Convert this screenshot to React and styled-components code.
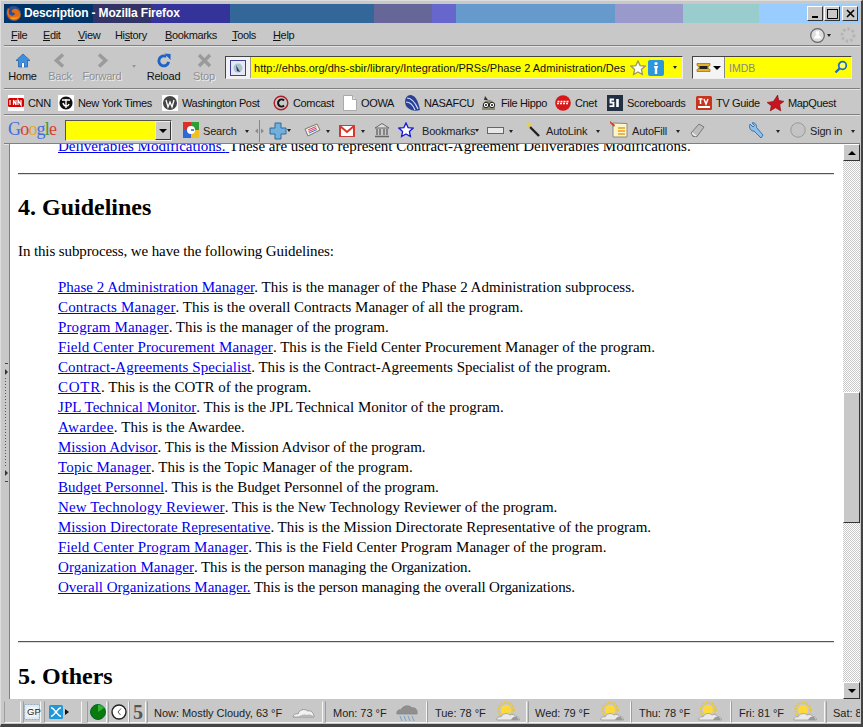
import React from "react";
import styled, { createGlobalStyle } from "styled-components";

const Global = createGlobalStyle`
  html, body { margin: 0; padding: 0; width: 863px; height: 727px; overflow: hidden; background: #c8c8c8; }
  * { box-sizing: border-box; }
`;

const Win = styled.div`
  position: relative; width: 863px; height: 727px; background: #c8c8c8; overflow: hidden;
  font-family: "Liberation Sans", sans-serif; color: #111;
  border-top: 1px solid #ddd; border-left: 1px solid #ddd;
  border-right: 2px solid #444; border-bottom: 3px solid #444;
`;
const TitleBar = styled.div`
  position: absolute; left: 3px; top: 3px; width: 856px; height: 19px; display: flex; overflow: hidden;
`;
const Seg = styled.div`
  width: ${p => p.$w}px; height: 100%; background: ${p => p.$c}; flex: none;
`;
const TitleText = styled.div`
  position: absolute; left: 20px; top: 1px; font: bold 12px/17px "Liberation Sans", sans-serif; letter-spacing: -0.15px; color: #fff; white-space: nowrap;
`;
const TitleIcon = styled.div`
  position: absolute; left: 1px; top: 1px; width: 17px; height: 17px;
`;
const WinBtns = styled.div`
  position: absolute; right: 2px; top: 2px; display: flex;
`;
const WinBtn = styled.div`
  width: 16px; height: 15px; background: #c8c8c8; margin-left: ${p => p.$gap || 0}px;
  border: 1px solid; border-color: #fff #333 #333 #fff; display: flex; align-items: center; justify-content: center;
`;
const Bar = styled.div`
  position: absolute; left: 3px; width: 856px; top: ${p => p.$t}px; height: ${p => p.$h}px;
  border-bottom: 1px solid #808080; box-shadow: 0 1px 0 #e4e4e4;
`;
const MenuItem = styled.span`
  position: absolute; left: ${p => p.$x}px; top: 3px; font: 11px/17px "Liberation Sans", sans-serif; letter-spacing: -0.35px; color: #111; white-space: nowrap;
  u { text-decoration: underline; }
`;
const NavBtn = styled.div`
  position: absolute; left: ${p => p.$x}px; top: 7px; width: ${p => p.$w}px; display: flex; flex-direction: column; align-items: center;
  font: 11px/14px "Liberation Sans", sans-serif; letter-spacing: -0.2px; color: ${p => p.$off ? "#8f8f8f" : "#111"};
  text-shadow: ${p => p.$off ? "1px 1px 0 #eee" : "none"}; svg { display: block; margin-bottom: 1px; }
`;
const UrlBox = styled.div`
  position: absolute; left: 221px; top: 10px; width: 458px; height: 23px; background: #ffff00;
  border: 1px solid; border-color: #444 #eee #eee #444; display: flex; align-items: center; overflow: hidden;
`;
const UrlFav = styled.div`
  width: 25px; height: 100%; flex: none; background: #f2f2f4; border-right: 1px solid #999; display: flex; align-items: center; justify-content: center;
`;
const UrlText = styled.div`
  width: 371px; margin-left: 3px; font: 11px/16px "Liberation Sans", sans-serif; letter-spacing: .02px; overflow: hidden; white-space: nowrap; flex: none; color: #111;
`;
const SearchBox = styled.div`
  position: absolute; left: 688px; top: 10px; width: 160px; height: 23px; background: #ffff00;
  border: 1px solid; border-color: #444 #eee #eee #444; display: flex; align-items: center;
`;
const SearchEngine = styled.div`
  width: 32px; height: 100%; flex: none; background: #f4f4f4; border-right: 1px solid #888; display: flex; align-items: center; justify-content: center; gap: 2px;
`;
const SearchHint = styled.div`
  margin-left: 4px; font: 10.5px/16px "Liberation Sans", sans-serif; color: #888;
`;
const Caret = styled.span`
  position: absolute; left: ${p => p.$x}px; top: ${p => p.$y}px; width: 0; height: 0;
  border-left: 2.5px solid transparent; border-right: 2.5px solid transparent; border-top: 3px solid ${p => p.$c || "#222"};
`;
const Place = styled.div`
  position: absolute; left: ${p => p.$x}px; top: ${p => p.$y}px; line-height: 0;
`;
const BmItem = styled.span`
  position: absolute; left: ${p => p.$x}px; top: 5px; display: flex; align-items: center; gap: 4px; height: 18px;
  font: 11px/17px "Liberation Sans", sans-serif; letter-spacing: -0.35px; white-space: nowrap; color: #111;
`;
const GText = styled.span`
  position: absolute; left: ${p => p.$x}px; top: 8px; font: 11px/16px "Liberation Sans", sans-serif; letter-spacing: -0.2px; white-space: nowrap; color: #222;
`;
const GoogleLogo = styled.span`
  position: absolute; left: 4px; top: 3px; font: 18px/22px "Liberation Serif", serif; letter-spacing: -0.8px;
`;
const GL = styled.span` color: ${p => p.$c}; `;
const GInput = styled.div`
  position: absolute; left: 61px; top: 5px; width: 107px; height: 21px; background: #ffff00;
  border: 1px solid; border-color: #555 #eee #eee #555;
`;
const GDrop = styled.div`
  position: absolute; right: 0; top: 0; width: 16px; height: 19px; background: #c8c8c8;
  border: 1px solid; border-color: #eee #333 #333 #eee; display: flex; align-items: center; justify-content: center;
`;
const Tri = styled.span`
  width: 0; height: 0; border-left: 4px solid transparent; border-right: 4px solid transparent;
  border-${p => p.$up ? "bottom" : "top"}: 4px solid #000;
`;
const Side = styled.div`
  position: absolute; left: 3px; top: 143px; width: 5px; height: 556px;
`;
const Page = styled.div`
  position: absolute; left: 8px; top: 143px; width: 834px; height: 555px; background: #fff; overflow: hidden;
  font: 15px/20px "Liberation Serif", serif; color: #000; border-left: 1px solid #808080;
`;
const Inner = styled.div`
  padding: 0 8px; margin-top: -8px;
`;
const Indent = styled.div` margin-left: 40px; `;
const Line = styled.div` height: 20px; white-space: nowrap; `;
const Link = styled.a`
  color: #0000ee; text-decoration: underline; letter-spacing: ${p => p.$ls || 0}px;
`;
const Tail = styled.span` letter-spacing: ${p => p.$ls || 0}px; `;
const Rule = styled.hr`
  margin: ${p => p.$m}; height: 2px; border: 0; border-top: 1px solid #555; border-bottom: 1px solid #ddd; width: 816px;
`;
const H2 = styled.h2`
  margin: ${p => p.$m}; font: bold 24px/28px "Liberation Serif", serif; color: #000;
`;
const Para = styled.p` margin: 0 0 16px; height: 20px; letter-spacing: -0.11px; `;
const Scroll = styled.div`
  position: absolute; left: 842px; top: 143px; width: 17px; height: 555px;
  background-color: #fff;
  background-image: conic-gradient(#c8c8c8 25%, #fff 0 50%, #c8c8c8 0 75%, #fff 0);
  background-size: 2px 2px;
`;
const ScrollBtn = styled.div`
  position: absolute; left: 0; ${p => p.$pos}: 0; width: 17px; height: 17px; background: #c8c8c8;
  border: 1px solid; border-color: #fff #333 #333 #fff; display: flex; align-items: center; justify-content: center;
`;
const Thumb = styled.div`
  position: absolute; left: 0; top: 248px; width: 17px; height: 131px; background: #c8c8c8;
  border: 1px solid; border-color: #fff #333 #333 #fff;
`;
const Status = styled.div`
  position: absolute; left: 3px; top: 699px; width: 856px; height: 24px; background: #c8c8c8; overflow: hidden;
`;
const Cell = styled.div`
  position: absolute; left: ${p => p.$x}px; top: 1px; height: 22px; width: ${p => p.$w}px;
  border: 1px solid; border-color: #c8c8c8 #f6f6f6 #f6f6f6 #9c9c9c; overflow: hidden;
`;
const Wx = styled.span`
  position: absolute; left: ${p => p.$x}px; top: 3px; font: 11px/16px "Liberation Sans", sans-serif; letter-spacing: -0.03px; white-space: nowrap; color: #222;
`;
const Five = styled.span`
  position: absolute; left: 3px; top: 0; font: bold 20px/20px "Liberation Serif", serif; color: #555;
`;
const GpText = styled.span`
  position: absolute; left: 23px; top: 7px; font: 9.5px/10px "Liberation Sans", sans-serif; color: #222;
`;

const Fox = () => (
  <svg width="17" height="17" viewBox="0 0 17 17">
    <circle cx="8.500" cy="8.500" r="7.500" fill="#2a4f96" />
    <path d="M3 3c-2 4-1 9 3 11.500 4 2 8 .5 9.500-3 .5-3-1-6-3-7-2-1.500-5-.5-5.500 1-1 1 0 2 1 2l2 1c0 2-3 3-5 1.500C3.500 8 3.500 5 4.500 4.500z" fill="#e66b10" />
    <path d="M5 13c3 2 7 1 9-2-1 1-4 2-6 1.500z" fill="#f6b01e" />
  </svg>
);
const Home = () => (
  <svg width="16" height="15" viewBox="0 0 16 15">
    <path d="M8 1 1 7.500h2.500V14h3.500v-4h2v4h3.500V7.500H15z" fill="#3f8fdc" stroke="#1c5aa0" strokeWidth=".7" />
    <path d="M7 10h2v4H7z" fill="#fff" />
  </svg>
);
const Chev = ({ dir }) => (
  <svg width="14" height="15" viewBox="0 0 14 15">
    <path d={dir === "l" ? "M10 1.500 3.500 7.500 10 13.500" : "M4 1.500 10.500 7.500 4 13.500"} fill="none" stroke="#9b9b9b" strokeWidth="3.600" />
  </svg>
);
const Reload = () => (
  <svg width="16" height="15" viewBox="0 0 16 16">
    <path d="M13 9.500A5.300 5.300 0 1 1 10.500 3.800" fill="none" stroke="#1f62c8" strokeWidth="3" />
    <path d="M8.500 0.500 15 1v6.500z" fill="#1f62c8" />
  </svg>
);
const Stop = () => (
  <svg width="15" height="15" viewBox="0 0 15 15">
    <path d="M2 2l11 11M13 2 2 13" stroke="#9a9a9a" strokeWidth="3.400" />
  </svg>
);
const Fav = () => (
  <svg width="16" height="16" viewBox="0 0 16 16">
    <rect x=".5" y=".5" width="15" height="15" fill="#e6e8f4" stroke="#3b3f9a" />
    <circle cx="8" cy="8" r="4.500" fill="#a9c4cf" />
    <path d="M6 5l4 7-3-1z" fill="#335" />
  </svg>
);
const Star = ({ fill = "#fff", stroke = "#9a9a60", s = 16 }) => (
  <svg width={s} height={s} viewBox="0 0 16 16">
    <path d="M8 1l2.100 4.600 5 .5-3.700 3.400 1 5L8 12l-4.400 2.500 1-5L.9 6.100l5-.5z" fill={fill} stroke={stroke} strokeWidth="1.300" />
  </svg>
);
const Info = () => (
  <svg width="16" height="16" viewBox="0 0 16 16">
    <rect width="16" height="16" rx="2" fill="#2c97de" />
    <circle cx="8" cy="3.500" r="1.600" fill="#fff" />
    <path d="M6 6h4v1.500l-.8.300V14H6.800V7.800L6 7.500z" fill="#fff" />
  </svg>
);
const Glass = () => (
  <svg width="14" height="14" viewBox="0 0 14 14">
    <circle cx="8.500" cy="5.500" r="3.800" fill="#ffff66" stroke="#1f6fb8" strokeWidth="1.800" />
    <path d="M5.500 8.500 1.500 12.500" stroke="#1f6fb8" strokeWidth="2.400" />
  </svg>
);
const ImdbIcon = () => (
  <svg width="15" height="9" viewBox="0 0 15 9">
    <path d="M1 .5h13v2a2 2 0 0 0 0 4v2H1v-2a2 2 0 0 0 0-4z" fill="#e8b52a" stroke="#8a6510" strokeWidth=".7" />
    <rect x="3.500" y="3" width="8" height="3" fill="#222" />
  </svg>
);
const Cnn = () => (
  <svg width="16" height="16" viewBox="0 0 16 16">
    <rect width="16" height="16" fill="#fff" />
    <rect y="3" width="16" height="9" rx="1.500" fill="#d40000" />
    <path d="M2 5v5M5.500 10V5l2.500 5V5M10 10V5l3 5V5" fill="none" stroke="#fff" strokeWidth="1.200" />
  </svg>
);
const Nyt = () => (
  <svg width="16" height="16" viewBox="0 0 16 16">
    <rect width="16" height="16" fill="#fff" />
    <path d="M8 1.500c4 0 6.500 3 6.500 6.500S12 14.500 8 14.500 1.500 11.500 1.500 8 4 1.500 8 1.500z" fill="#111" />
    <path d="M4 5h8M8 4v9M5 8c1 4 5 4 6 1" stroke="#fff" strokeWidth="1.400" fill="none" />
  </svg>
);
const Wp = () => (
  <svg width="16" height="16" viewBox="0 0 16 16">
    <rect width="16" height="16" fill="#fff" />
    <circle cx="8" cy="8" r="7" fill="#444" />
    <path d="M4 5l2 7 2-5 2 5 2-7" stroke="#fff" strokeWidth="1.300" fill="none" />
  </svg>
);
const Comcast = () => (
  <svg width="16" height="16" viewBox="0 0 16 16">
    <circle cx="8" cy="8" r="6.800" fill="none" stroke="#b01c28" strokeWidth="1.400" />
    <path d="M11 5.500a3.500 3.500 0 1 0 0 5" fill="none" stroke="#111" strokeWidth="2" />
  </svg>
);
const Doc = () => (
  <svg width="14" height="16" viewBox="0 0 14 16">
    <path d="M.5.500h9l4 4v11H.500z" fill="#fff" stroke="#aaa" />
    <path d="M9.500.500v4h4" fill="#ddd" stroke="#aaa" />
  </svg>
);
const Nasa = () => (
  <svg width="16" height="16" viewBox="0 0 16 16">
    <path d="M6 0c5 0 8 5 10 15-5 2-11 0-14-4C0 6 1 1 6 0z" fill="#2a3f95" />
    <path d="M3 3c4 0 8 4 11 11M2 7c4 0 7 3 9 8" stroke="#cfe0ff" strokeWidth="1.200" fill="none" />
  </svg>
);
const Hippo = () => (
  <svg width="17" height="17" viewBox="0 0 17 17">
    <path d="M2 15c0-7 3-10 7-10s6 4 6 10z" fill="#8a8a70" />
    <path d="M5 1l3 4-4 0z" fill="#333" />
    <circle cx="6" cy="10" r="2.700" fill="#fff" stroke="#222" />
    <circle cx="12" cy="10" r="2.700" fill="#fff" stroke="#222" />
    <circle cx="6" cy="10" r="1" fill="#111" />
    <circle cx="12" cy="10" r="1" fill="#111" />
  </svg>
);
const CnetDot = () => (
  <svg width="16" height="16" viewBox="0 0 16 16">
    <circle cx="8" cy="8" r="7.800" fill="#d81818" />
    <path d="M2 8.500h12M2.500 6.500h11" stroke="#fff" strokeWidth="1.300" strokeDasharray="2 1" />
  </svg>
);
const Si = () => (
  <svg width="16" height="16" viewBox="0 0 16 16">
    <rect width="16" height="16" fill="#223044" />
    <path d="M7 4.500H3.500v3.200H6.500v3.500H2.500" fill="none" stroke="#fff" strokeWidth="1.800" />
    <path d="M10.500 4v8" stroke="#fff" strokeWidth="2.600" />
  </svg>
);
const TvG = () => (
  <svg width="16" height="14" viewBox="0 0 16 14">
    <rect width="16" height="14" rx="1.500" fill="#c8351f" />
    <path d="M2.500 3h4M4.500 3v5M8 3l2 5 2-5" fill="none" stroke="#fff" strokeWidth="1.500" />
    <rect x="2" y="10" width="12" height="2" fill="#fff" />
  </svg>
);
const MapQ = () => (
  <svg width="17" height="17" viewBox="0 0 16 16"><path d="M10 0l1 5 5 1-4 3 1 6-5-3-5 3 1-5-4-3 6-1z" fill="#c8141e" stroke="#7a0a10" strokeWidth=".5" /></svg>
);
const GBadge = () => (
  <svg width="16" height="16" viewBox="0 0 16 16">
    <rect width="8" height="8" fill="#d9302a" /><rect x="8" width="8" height="8" fill="#2f9e35" />
    <rect y="8" width="8" height="8" fill="#2f68d8" /><rect x="8" y="8" width="8" height="8" fill="#f0c020" />
    <circle cx="8" cy="8" r="4" fill="#fff" /><path d="M8 8h3" stroke="#2f68d8" strokeWidth="1.600" />
  </svg>
);
const Grip = () => (
  <svg width="9" height="22" viewBox="0 0 9 22">
    <path d="M4.500 0v22" stroke="#888" />
    <path d="M3 8.500v5L0 11zM6 8.500v5L9 11z" fill="#8a8a8a" />
  </svg>
);
const Plus = () => (
  <svg width="18" height="18" viewBox="0 0 18 18">
    <path d="M6 1h6v5h5v6h-5v5H6v-5H1V6h5z" fill="#6fb0dc" stroke="#336a9c" strokeWidth="1" />
  </svg>
);
const Cards = () => (
  <svg width="17" height="15" viewBox="0 0 17 15">
    <path d="M1 6l12-5 3 6-12 6z" fill="#f4f0e0" stroke="#777" />
    <path d="M4 7l8-3.500M4.600 8.500l8-3.500" stroke="#e04070" strokeWidth="1" />
    <path d="M5 10l8-3.500" stroke="#4070e0" strokeWidth="1" />
  </svg>
);
const Gmail = () => (
  <svg width="16" height="12" viewBox="0 0 16 12">
    <rect x=".5" y=".5" width="15" height="11" fill="#fff" stroke="#c94038" />
    <path d="M1 1l7 6 7-6" fill="none" stroke="#d8362a" strokeWidth="2" />
    <path d="M1 1v10M15 1v10" stroke="#d8362a" strokeWidth="2" />
  </svg>
);
const Bank = () => (
  <svg width="16" height="15" viewBox="0 0 16 15">
    <path d="M8 .500 15 5H1z" fill="#ddd" stroke="#666" />
    <path d="M3 6v6M6 6v6M10 6v6M13 6v6" stroke="#666" strokeWidth="1.400" />
    <path d="M1 13.500h14" stroke="#666" strokeWidth="1.500" />
  </svg>
);
const Wand = () => (
  <svg width="17" height="17" viewBox="0 0 17 17">
    <path d="M6 6l9 9" stroke="#222" strokeWidth="2.400" />
    <path d="M5 0l1 3 3 1-3 1-1 3-1-3-3-1 3-1z" fill="#e8d040" />
    <path d="M1 9l.7 1.500 1.500.5-1.500.5L1 13z" fill="#e8d040" />
  </svg>
);
const Fill = () => (
  <svg width="18" height="17" viewBox="0 0 18 17">
    <path d="M3 2l14 .5V16H3z" fill="#fff6c8" stroke="#888" />
    <path d="M8 7h7M8 10h7M8 13h7" stroke="#e8a020" strokeWidth="1.500" />
    <path d="M0 0l5 4-1 2-4-4z" fill="#d24020" />
  </svg>
);
const Eraser = () => (
  <svg width="15" height="15" viewBox="0 0 15 15">
    <path d="M1 10l8-9 5 3-7 9.500H3z" fill="#bdbdbd" stroke="#777" />
    <path d="M2 10l4 3" stroke="#eee" strokeWidth="1.500" />
  </svg>
);
const Wrench = () => (
  <svg width="16" height="17" viewBox="0 0 16 17">
    <path d="M2 2l3 3 1.500-1.500L4 1c3-1 5 2 4.500 4.500L15 13l-2 3-7-7C3 9.500 .5 6 2 2z" fill="#8fc0ec" stroke="#2f6aa8" strokeWidth=".9" />
  </svg>
);
const Sign = () => (
  <svg width="16" height="16" viewBox="0 0 16 16">
    <circle cx="8" cy="8" r="7.200" fill="#c4c4c4" stroke="#999" />
  </svg>
);
const Account = () => (
  <svg width="15" height="15" viewBox="0 0 15 15">
    <circle cx="7.500" cy="7.500" r="6.800" fill="#ddd" stroke="#666" strokeWidth="1.200" />
    <path d="M4 10.500c1-5 6-5 7 0z" fill="#fff" /><circle cx="7.500" cy="5" r="2" fill="#fff" />
  </svg>
);
const Spin = () => (
  <svg width="16" height="16" viewBox="0 0 16 16">
    <circle cx="8" cy="8" r="6" fill="none" stroke="#b4b4b4" strokeWidth="3" strokeDasharray="2.500 2" />
  </svg>
);
const Gp = () => (
  <svg width="16" height="16" viewBox="0 0 16 16">
    <rect x=".5" y=".5" width="15" height="15" fill="#dcebf6" stroke="#9ab" strokeDasharray="2 1" />
    <rect x="2.500" y="3" width="11" height="10" rx="2" fill="#f4f4f4" />
  </svg>
);
const XBox = () => (
  <svg width="14" height="14" viewBox="0 0 14 14">
    <rect width="14" height="14" rx="1.500" fill="#1f97d8" />
    <path d="M2 2.500c3 1 3.500 3 5 4.500 1.500-1.500 2-3.500 5-4.500M2 11.500c3-1 3.500-3 5-4.500 1.500 1.500 2 3.500 5 4.500" fill="none" stroke="#fff" strokeWidth="1.500" />
  </svg>
);
const Globe = () => (
  <svg width="16" height="16" viewBox="0 0 16 16">
    <circle cx="8" cy="8" r="7.500" fill="#0a7a0a" stroke="#063" />
    <path d="M8 8V.8A7.200 7.200 0 0 1 14 4z" fill="#35b535" />
  </svg>
);
const Clock = () => (
  <svg width="16" height="16" viewBox="0 0 16 16">
    <circle cx="8" cy="8" r="7" fill="#fff" stroke="#222" strokeWidth="1.400" />
    <path d="M10 4.500 7 8l2.500 3" fill="none" stroke="#555" />
  </svg>
);
const Cloud = ({ rain }) => (
  <svg width={rain ? 26 : 24} height={rain ? 20 : 14} viewBox={rain ? "0 0 24 20" : "0 0 24 14"}>
    <path d={rain ? "M2 12c-1-3 2-5 4-4 1-4 8-6 11-2 3-1 6 2 5 6z" : "M1 12c0-2 3-4 5-3 1-4 6-6 10-3 3-1 6 2 6 6z"} fill={rain ? "#8f8f8f" : "#f2f2f2"} stroke="#888" strokeWidth=".8" />
    {!rain && <path d="M6 12c2-2 6-3 9-2 3-1 6 0 7 2z" fill="#b8b8b8" />}
    {rain && <path d="M5 14l2 5M9 14l2 5M13 14l2 5M17 14l2 5" stroke="#6d9bc8" strokeWidth=".9" />}
  </svg>
);
const SunCloud = () => (
  <svg width="25" height="20" viewBox="0 0 25 20">
    <circle cx="10" cy="8" r="5" fill="#ffd83a" />
    <circle cx="10" cy="8" r="7.500" fill="none" stroke="#f2c418" strokeWidth="2.200" strokeDasharray="1.500 1.500" />
    <path d="M1 18c-1-2 2-4 4-3 1-3 6-5 9-2 2-1 5-.5 6 1.500 2 0 4 2 3.500 3.500z" fill="#e9e9e9" stroke="#888" strokeWidth=".6" />
    <path d="M15 18c1-2 2-3 4-3.500 2 0 4 2 3.500 3.500z" fill="#999" />
  </svg>
);

const segments = [[89, "#003366"], [58, "#333366"], [79, "#333399"], [144, "#336699"], [58, "#666699"], [24, "#6666cc"], [159, "#6699cc"], [68, "#9999cc"], [76, "#99cccc"], [101, "#99ccff"]];
const menu = [["F", "ile", 7], ["E", "dit", 39], ["V", "iew", 74], ["Hi", "story", 111, true], ["B", "ookmarks", 161], ["T", "ools", 228], ["H", "elp", 269]];
const bookmarks = [
  [Cnn, "CNN", 4], [Nyt, "New York Times", 54], [Wp, "Washington Post", 158], [Comcast, "Comcast", 269], [Doc, "OOWA", 339],
  [Nasa, "NASAFCU", 400], [Hippo, "File Hippo", 476], [CnetDot, "Cnet", 551], [Si, "Scoreboards", 603], [TvG, "TV Guide", 692], [MapQ, "MapQuest", 763]
];
const people = [
  ["Phase 2 Administration Manager", "This is the manager of the Phase 2 Administration subprocess.", 0, 0],
  ["Contracts Manager", "This is the overall Contracts Manager of all the program.", .18, -.02],
  ["Program Manager", "This is the manager of the program.", .13, -.05],
  ["Field Center Procurement Manager", "This is the Field Center Procurement Manager of the program.", .09, 0],
  ["Contract-Agreements Specialist", "This is the Contract-Agreements Specialist of the program.", .07, -.03],
  ["COTR", "This is the COTR of the program.", .75, 0],
  ["JPL Technical Monitor", "This is the JPL Technical Monitor of the program.", .05, 0],
  ["Awardee", "This is the Awardee.", .43, .09],
  ["Mission Advisor", "This is the Mission Advisor of the program.", 0, -.04],
  ["Topic Manager", "This is the Topic Manager of the program.", .15, .02],
  ["Budget Personnel", "This is the Budget Personnel of the program.", 0, -.04],
  ["New Technology Reviewer", "This is the New Technology Reviewer of the program.", .13, -.02],
  ["Mission Directorate Representative", "This is the Mission Directorate Representative of the program.", 0, -.03],
  ["Field Center Program Manager", "This is the Field Center Program Manager of the program.", .11, .02],
  ["Organization Manager", "This is the person managing the Organization.", .05, -.15],
  ["Overall Organizations Manager.", "This is the person managing the overall Organizations.", 0, -.13],
];
const Dots = styled.div`
  position: absolute; left: 1px; top: ${p => p.$t}px; width: 1px; height: ${p => p.$h}px;
  background: repeating-linear-gradient(#555 0 1px, transparent 1px 3px);
`;
const SideTri = styled.span`
  position: absolute; left: 1px; top: ${p => p.$t}px; width: 0; height: 0;
  border-top: 3px solid transparent; border-bottom: 3px solid transparent; border-left: 3px solid #333;
`;
const Dash = styled.span`
  position: absolute; left: 1px; top: ${p => p.$t}px; width: 3px; height: 1px; background: #444;
`;

export default function App() {
  return (
    <Win>
      <Global />
      <TitleBar>
        {segments.map(([w, c], i) => <Seg key={i} $w={w} $c={c} />)}
        <TitleIcon><Fox /></TitleIcon>
        <TitleText>Description - Mozilla Firefox</TitleText>
        <WinBtns>
          <WinBtn><svg width="9" height="9"><path d="M1 7h6v2H1z" fill="#000" /></svg></WinBtn>
          <WinBtn $gap={1}><svg width="11" height="11"><path d="M.5 1.500h10v9H.500z" fill="none" stroke="#000" /><path d="M0 1h11v1H0z" fill="#000" /></svg></WinBtn>
          <WinBtn $gap={2}><svg width="9" height="9"><path d="M1 1l7 7M8 1 1 8" stroke="#000" strokeWidth="1.600" /></svg></WinBtn>
        </WinBtns>
      </TitleBar>

      <Bar $t={23} $h={22}>
        {menu.map(([a, b, x, lower]) => lower
          ? <MenuItem key={a} $x={x}>Hi<u>s</u>tory</MenuItem>
          : <MenuItem key={a} $x={x}><u>{a}</u>{b}</MenuItem>)}
        <Place $x={806} $y={4}><Account /></Place>
        <Caret $x={823} $y={10} />
        <Place $x={836} $y={3}><Spin /></Place>
      </Bar>

      <Bar $t={45} $h={43}>
        <NavBtn $x={2} $w={33}><Home />Home</NavBtn>
        <NavBtn $x={40} $w={32} $off><Chev dir="l" />Back</NavBtn>
        <NavBtn $x={74} $w={48} $off><Chev dir="r" />Forward</NavBtn>
        <Caret $x={128} $y={19} $c="#999" />
        <NavBtn $x={141} $w={37}><Reload />Reload</NavBtn>
        <NavBtn $x={186} $w={28} $off><Stop />Stop</NavBtn>
        <UrlBox>
          <UrlFav><Fav /></UrlFav>
          <UrlText>http://ehbs.org/dhs-sbir/library/Integration/PRSs/Phase 2 Administration/Description.html</UrlText>
          <Place $x={404} $y={3}><Star /></Place>
          <Place $x={422} $y={3}><Info /></Place>
          <Caret $x={447} $y={9} />
        </UrlBox>
        <SearchBox>
          <SearchEngine><ImdbIcon /><Tri /></SearchEngine>
          <SearchHint>IMDB</SearchHint>
          <Place $x={141} $y={3}><Glass /></Place>
        </SearchBox>
      </Bar>

      <Bar $t={88} $h={26}>
        {bookmarks.map(([Icon, label, x]) => (
          <BmItem key={label} $x={x}><Icon />{label}</BmItem>
        ))}
      </Bar>

      <Bar $t={114} $h={29}>
        <GoogleLogo>
          <GL $c="#3f6fd8">G</GL><GL $c="#d8402c">o</GL><GL $c="#e0a820">o</GL><GL $c="#3f6fd8">g</GL><GL $c="#3a9a3a">l</GL><GL $c="#d8402c">e</GL>
        </GoogleLogo>
        <GInput><GDrop><Tri /></GDrop></GInput>
        <Place $x={179} $y={7}><GBadge /></Place>
        <GText $x={199}>Search</GText>
        <Caret $x={241} $y={15} />
        <Place $x={251} $y={5}><Grip /></Place>
        <Place $x={265} $y={7}><Plus /></Place>
        <Caret $x={283} $y={14} />
        <Place $x={300} $y={8}><Cards /></Place>
        <Caret $x={322} $y={15} />
        <Place $x={335} $y={10}><Gmail /></Place>
        <Caret $x={357} $y={15} />
        <Place $x={370} $y={8}><Bank /></Place>
        <Place $x={394} $y={7}><Star fill="#fff" stroke="#1418d8" /></Place>
        <GText $x={418}>Bookmarks</GText>
        <Caret $x={471} $y={14} />
        <Place $x={483} $y={12}><svg width="17" height="7"><rect x=".5" y=".5" width="16" height="6" fill="#e8e8e8" stroke="#666" /></svg></Place>
        <Caret $x={505} $y={15} />
        <Place $x={520} $y={6}><Wand /></Place>
        <GText $x={542}>AutoLink</GText>
        <Caret $x={592} $y={15} />
        <Place $x={606} $y={6}><Fill /></Place>
        <GText $x={628}>AutoFill</GText>
        <Caret $x={672} $y={15} />
        <Place $x={686} $y={8}><Eraser /></Place>
        <Place $x={744} $y={7}><Wrench /></Place>
        <Caret $x={772} $y={15} />
        <Place $x={786} $y={7}><Sign /></Place>
        <GText $x={806}>Sign in</GText>
        <Caret $x={847} $y={15} />
      </Bar>

      <Side>
        <Dash $t={219} />
        <SideTri $t={225} />
        <Dots $t={234} $h={90} />
        <SideTri $t={326} />
        <Dash $t={337} />
      </Side>

      <Page>
        <Inner>
          <Indent><Line><Link href="#">Deliverables Modifications.{"\u00a0"}</Link>These are used to represent Contract-Agreement Deliverables Modifications.</Line></Indent>
          <Rule $m="17px 0 0" />
          <H2 $m="18px 0 20px">4. Guidelines</H2>
          <Para>In this subprocess, we have the following Guidelines:</Para>
          <Indent>
            {people.map(([a, b, ls, tail]) => (
              <Line key={a}>
                <Link href="#" $ls={ls}>{a}</Link>
                <Tail $ls={tail}>{a.endsWith(".") ? " " : ". "}{b}</Tail>
              </Line>
            ))}
          </Indent>
          <Rule $m="44px 0 0" />
          <H2 $m="19px 0 0">5. Others</H2>
        </Inner>
      </Page>

      <Scroll>
        <ScrollBtn $pos="top"><Tri $up /></ScrollBtn>
        <Thumb />
        <ScrollBtn $pos="bottom"><Tri /></ScrollBtn>
      </Scroll>

      <Status>
        <Cell $x={0} $w={17} />
        <Cell $x={19} $w={18}><Place $x={0} $y={2}><Gp /></Place></Cell>
        <GpText>GP</GpText>
        <Cell $x={40} $w={38}><Place $x={4} $y={3}><XBox /></Place><Place $x={20} $y={7}><svg width="4" height="6"><path d="M0 0l4 3-4 3z" fill="#111" /></svg></Place></Cell>
        <Cell $x={83} $w={20}><Place $x={2} $y={2}><Globe /></Place></Cell>
        <Cell $x={104} $w={21}><Place $x={2} $y={2}><Clock /></Place></Cell>
        <Cell $x={125} $w={17}><Five>5</Five></Cell>
        <Cell $x={143} $w={176}>
          <Wx $x={6}>Now: Mostly Cloudy, 63 °F</Wx>
          <Place $x={144} $y={3}><Cloud /></Place>
        </Cell>
        <Cell $x={321} $w={102}>
          <Wx $x={7}>Mon: 73 °F</Wx>
          <Place $x={68} $y={0}><Cloud rain /></Place>
        </Cell>
        <Cell $x={423} $w={100}>
          <Wx $x={7}>Tue: 78 °F</Wx>
          <Place $x={68} $y={0}><SunCloud /></Place>
        </Cell>
        <Cell $x={524} $w={103}>
          <Wx $x={6}>Wed: 79 °F</Wx>
          <Place $x={71} $y={0}><SunCloud /></Place>
        </Cell>
        <Cell $x={627} $w={100}>
          <Wx $x={7}>Thu: 78 °F</Wx>
          <Place $x={66} $y={0}><SunCloud /></Place>
        </Cell>
        <Cell $x={727} $w={94}>
          <Wx $x={7}>Fri: 81 °F</Wx>
          <Place $x={61} $y={0}><SunCloud /></Place>
        </Cell>
        <Cell $x={822} $w={40}>
          <Wx $x={6}>Sat: 8</Wx>
        </Cell>
      </Status>
    </Win>
  );
}
